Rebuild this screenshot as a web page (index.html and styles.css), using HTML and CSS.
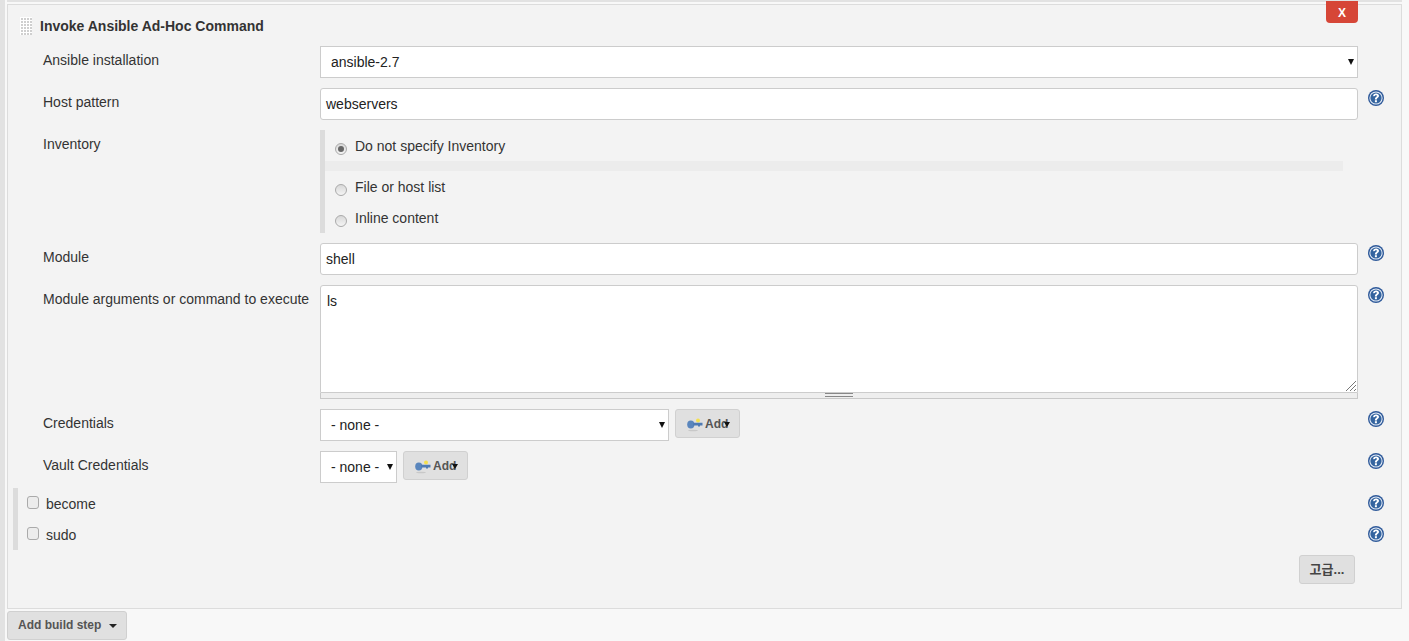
FILE: index.html
```html
<!DOCTYPE html>
<html lang="ko">
<head>
<meta charset="utf-8">
<title>Invoke Ansible Ad-Hoc Command</title>
<link rel="stylesheet" href="styles.css">
</head>
<body>
<svg class="defs" width="0" height="0" aria-hidden="true">
  <defs>
    <symbol id="help" viewBox="0 0 16 16">
      <circle cx="8" cy="8" r="8" fill="#2f5a9a"/>
      <circle cx="8" cy="8" r="6.6" fill="#e6edf7"/>
      <circle cx="8" cy="8" r="5.6" fill="#34649f"/>
      <path d="M5.1 6.2C5.1 4.4 6.4 3.4 8.1 3.4s2.9 1 2.9 2.4c0 1.1-.6 1.7-1.4 2.3-.5.4-.7.7-.7 1.3H6.900c0-1.200.4-1.800 1.100-2.300.5-.4.8-.7.8-1.200 0-.5-.3-.8-.8-.8-.6 0-.9.4-.9 1z" fill="#fff"/>
      <rect x="6.900" y="10.200" width="2" height="2" fill="#fff"/>
    </symbol>
    <symbol id="key" viewBox="0 0 16 16">
      <ellipse cx="6" cy="14.500" rx="5" ry="0.800" fill="#c8c8c8"/>
      <circle cx="11" cy="4.500" r="2" fill="#f4e04d"/>
      <ellipse cx="3.800" cy="8.500" rx="3.600" ry="4" fill="#5a86bd"/>
      <path d="M6 6.800h9.500v2.800H13v1h-2v-1H6z" fill="#4f7bb3"/>
    </symbol>
  </defs>
</svg>
<main class="page">
  <div class="top-rule"></div>
  <section class="panel">
    <button class="delete" type="button">X</button>
    <header class="panel-head">
      <span class="grip"></span>
      <b class="panel-title">Invoke Ansible Ad-Hoc Command</b>
    </header>
    <div class="form">
      <div class="row">
        <label class="lab">Ansible installation</label>
        <div class="field"><div class="select wide">ansible-2.7<i class="arrow"></i></div></div>
        <span class="help-slot"></span>
      </div>
      <div class="row">
        <label class="lab">Host pattern</label>
        <div class="field"><div class="input">webservers</div></div>
        <span class="help-slot"><svg class="help"><use href="#help"/></svg></span>
      </div>
      <div class="row inv">
        <label class="lab">Inventory</label>
        <div class="field">
          <div class="radios">
            <div class="radio"><span class="dot on"></span><span>Do not specify Inventory</span></div>
            <div class="radio-sep"></div>
            <div class="radio"><span class="dot"></span><span>File or host list</span></div>
            <div class="radio"><span class="dot"></span><span>Inline content</span></div>
          </div>
        </div>
        <span class="help-slot"></span>
      </div>
      <div class="row">
        <label class="lab">Module</label>
        <div class="field"><div class="input">shell</div></div>
        <span class="help-slot"><svg class="help"><use href="#help"/></svg></span>
      </div>
      <div class="row">
        <label class="lab">Module arguments or command to execute</label>
        <div class="field">
          <div class="textarea">ls<svg class="corner" width="11" height="11" viewBox="0 0 11 11"><path d="M1 11 11 1M5 11l6-6M9 11l2-2" stroke="#777" fill="none"/></svg></div>
          <div class="grippie"><i></i></div>
        </div>
        <span class="help-slot"><svg class="help"><use href="#help"/></svg></span>
      </div>
      <div class="row">
        <label class="lab">Credentials</label>
        <div class="field cred">
          <div class="select cred-a">- none -<i class="arrow"></i></div>
          <div class="add"><svg class="key"><use href="#key"/></svg><span>Add</span><i class="arrow small"></i></div>
        </div>
        <span class="help-slot"><svg class="help"><use href="#help"/></svg></span>
      </div>
      <div class="row">
        <label class="lab">Vault Credentials</label>
        <div class="field cred">
          <div class="select cred-b">- none -<i class="arrow"></i></div>
          <div class="add"><svg class="key"><use href="#key"/></svg><span>Add</span><i class="arrow small"></i></div>
        </div>
        <span class="help-slot"><svg class="help"><use href="#help"/></svg></span>
      </div>
    </div>
    <div class="checks">
      <div class="check"><span class="box"></span><span class="check-text">become</span><svg class="help"><use href="#help"/></svg></div>
      <div class="check"><span class="box"></span><span class="check-text">sudo</span><svg class="help"><use href="#help"/></svg></div>
    </div>
    <div class="adv"><button class="btn" type="button">고급...</button></div>
  </section>
  <button class="btn add-step" type="button">Add build step<i class="caret"></i></button>
</main>
</body>
</html>
```
FILE: styles.css
```css
* { box-sizing: border-box; }
html, body { margin: 0; height: 641px; overflow: hidden; }
body { background: #f8f8f8; color: #333; font: 14px "Liberation Sans", "Noto Sans CJK KR", sans-serif; }
.defs { position: absolute; }
.page { height: 641px; padding-left: 2px; border-left: 5px solid #e2e2e2; position: relative; }
.top-rule { height: 2px; margin-right: 7px; background: #e2e2e2; }
.panel { position: relative; width: 1395px; height: 605px; margin-top: 2px; background: #f3f3f3; border: 1px solid #dcdcdc; }
.delete { position: absolute; top: -4px; right: 43px; width: 32px; height: 22px; border: 0; border-radius: 0 0 4px 4px; background: #d64637; color: #fff; font: bold 12px "Liberation Sans", sans-serif; padding: 2px 0 0; }
.panel-head { display: flex; align-items: center; height: 20px; margin: 11px 0 0 12px; }
.grip { width: 12px; height: 18px; margin-right: 8px; background-color: #cfcfcf; background-image: linear-gradient(to right, #fff 1px, transparent 1px), linear-gradient(to bottom, #fff 1px, transparent 1px); background-size: 3px 3px; }
.panel-title { font-size: 14px; }
.form { margin-top: 10px; }
.row { display: flex; align-items: flex-start; padding-left: 35px; margin-bottom: 10px; }
.lab { width: 277px; padding-top: 6px; flex: none; }
.field { width: 1038px; flex: none; }
.help-slot { width: 34px; padding: 2px 0 0 10px; flex: none; }
.help { display: block; width: 16px; height: 16px; }
.select, .input { height: 32px; background: #fff; border: 1px solid #ccc; color: #222; line-height: 30px; position: relative; }
.select { padding-left: 10px; }
.input { border-radius: 3px; padding-left: 5px; }
.arrow { position: absolute; right: 3px; top: 12px; border: 3.5px solid transparent; border-top: 6px solid #111; border-bottom: 0; }
.arrow.small { position: static; display: inline-block; margin-left: -4px; border-width: 3.5px; border-top-width: 5px; border-bottom-width: 0; transform: translateY(1px); }
.radios { border-left: 5px solid #dcdcdc; height: 103px; width: 1023px; }
.radio { display: flex; align-items: center; height: 31px; padding-left: 10px; }
.radio-sep { height: 10px; background: #ececec; }
.dot { width: 12px; height: 12px; border-radius: 50%; border: 1px solid #aaa; background: linear-gradient(#d8d8d8, #f4f4f4); margin: 6px 8px 0 0; position: relative; }
.dot.on::after { content: ""; position: absolute; left: 2px; top: 2px; width: 6px; height: 6px; border-radius: 50%; background: #666; }
.textarea { position: relative; height: 108px; background: #fff; border: 1px solid #ccc; border-radius: 3px 3px 0 0; padding: 7px 6px; color: #222; }
.corner { position: absolute; right: 1px; bottom: 1px; }
.grippie { height: 6px; border: 1px solid #c8c8c8; border-top: 0; background: #eee; position: relative; }
.grippie i { position: absolute; left: 504px; top: 0; width: 28px; height: 4px; border-top: 1px solid #888; border-bottom: 1px solid #888; }
.cred { display: flex; gap: 6px; align-items: flex-start; }
.cred-a { width: 349px; }
.cred-b { width: 77px; }
.add { width: 65px; height: 29px; background: #e0e0e0; border: 1px solid #d0d0d0; border-radius: 3px; display: flex; align-items: center; padding-left: 11px; font-weight: bold; font-size: 12px; color: #555; }
.key { width: 16px; height: 16px; margin-right: 2px; flex: none; }
.checks { margin: -5px 0 0 5px; border-left: 5px solid #dcdcdc; height: 62px; }
.check { display: flex; height: 31px; align-items: center; padding-left: 9px; position: relative; }
.box { width: 12px; height: 13px; border: 1px solid #aaa; border-radius: 3px; background: #ececec; margin: -3px 7px 0 0; }
.check-text { padding-top: 1px; }
.check .help { position: absolute; left: 1350px; top: 7px; }
.adv { display: flex; justify-content: flex-end; padding-right: 46px; margin-top: 5px; }
.btn { background: #e0e0e0; border: 1px solid #d0d0d0; border-radius: 3px; color: #555; font: bold 12px "Liberation Sans", "Noto Sans CJK KR", sans-serif; }
.adv .btn { width: 56px; height: 29px; padding: 0 0 3px; font-size: 13px; color: #444; }
.add-step { display: block; margin-top: 2px; width: 120px; height: 29px; text-align: left; padding: 0 0 2px 10px; }
.caret { display: inline-block; margin-left: 8px; border: 4px solid transparent; border-top-color: #222; border-bottom: 0; vertical-align: 1px; }
```
